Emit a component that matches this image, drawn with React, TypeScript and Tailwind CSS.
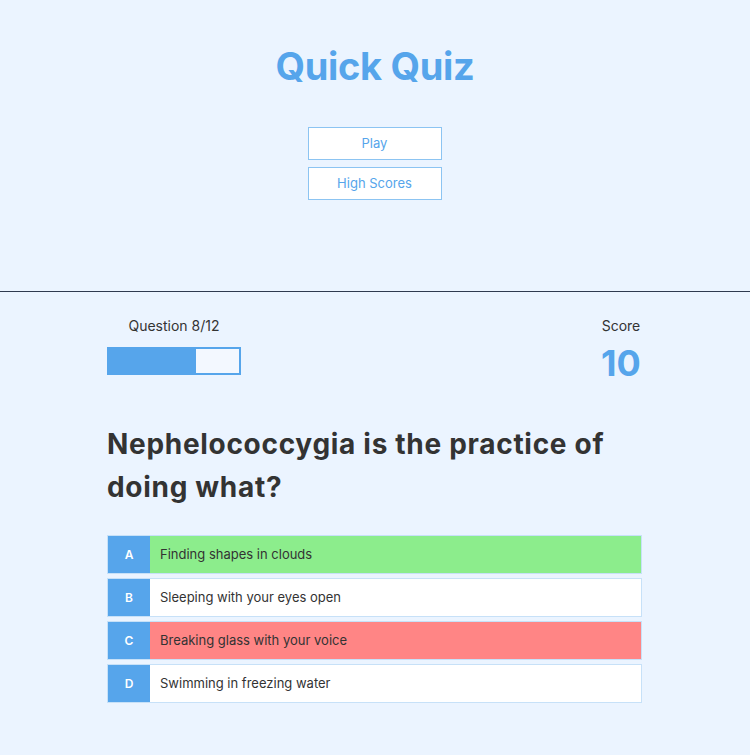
const choices = [
  { prefix: "A", text: "Finding shapes in clouds", state: "correct" },
  { prefix: "B", text: "Sleeping with your eyes open", state: "" },
  { prefix: "C", text: "Breaking glass with your voice", state: "incorrect" },
  { prefix: "D", text: "Swimming in freezing water", state: "" },
]

const App = () => {
  return (
    <div className="min-h-[755px] bg-[#ebf4ff] text-[#333] font-['Inter',sans-serif]">
      {/* home */}
      <div className="h-[291px] flex flex-col items-center pt-[44px]">
        <h1 className="text-[38px] leading-[44px] font-bold text-[#56a5eb] tracking-[-0.3px]">Quick Quiz</h1>
        <div className="mt-[39px] mr-[1px] flex flex-col gap-[7px]">
          <button className="w-[134px] h-[33px] bg-white border border-[#8cc4f2] text-[#56a5eb] text-[13px]">Play</button>
          <button className="w-[134px] h-[33px] bg-white border border-[#8cc4f2] text-[#56a5eb] text-[13px]">High Scores</button>
        </div>
      </div>

      {/* game */}
      <div className="border-t border-[#2f3a4f] pt-[24px]">
        <div className="w-[535px] ml-[107px]">
          <div className="flex justify-between">
            <div className="w-[134px] flex flex-col items-center">
              <p className="text-[14px] leading-[20px]">Question 8/12</p>
              <div className="mt-[11px] w-full h-[28px] border-2 border-[#56a5eb] bg-white/40">
                <div className="h-full bg-[#56a5eb]" style={{ width: `${(8 / 12) * 100}%` }} />
              </div>
            </div>
            <div className="w-[40px] mr-[1px] flex flex-col items-center">
              <p className="text-[14px] leading-[20px]">Score</p>
              <p className="mt-[7px] text-[36px] leading-[40px] font-bold text-[#56a5eb]">10</p>
            </div>
          </div>

          <h2 className="mt-[40px] text-[28px] leading-[43px] font-bold tracking-[0.7px]">
            Nephelococcygia is the practice of doing what?
          </h2>

          <div className="mt-[26px] flex flex-col gap-[4px]">
            {choices.map((c) => (
              <div
                key={c.prefix}
                className={`flex h-[39px] border border-[#c7e1f8] ${
                  c.state === "correct" ? "bg-[#8ced8c]" : c.state === "incorrect" ? "bg-[#ff8585]" : "bg-white"
                }`}
              >
                <div className="w-[42px] bg-[#56a5eb] text-white text-[12px] font-semibold flex items-center justify-center">
                  {c.prefix}
                </div>
                <p className="flex-1 px-[10px] flex items-center text-[13px]">{c.text}</p>
              </div>
            ))}
          </div>
        </div>
      </div>
    </div>
  )
}

export default App
